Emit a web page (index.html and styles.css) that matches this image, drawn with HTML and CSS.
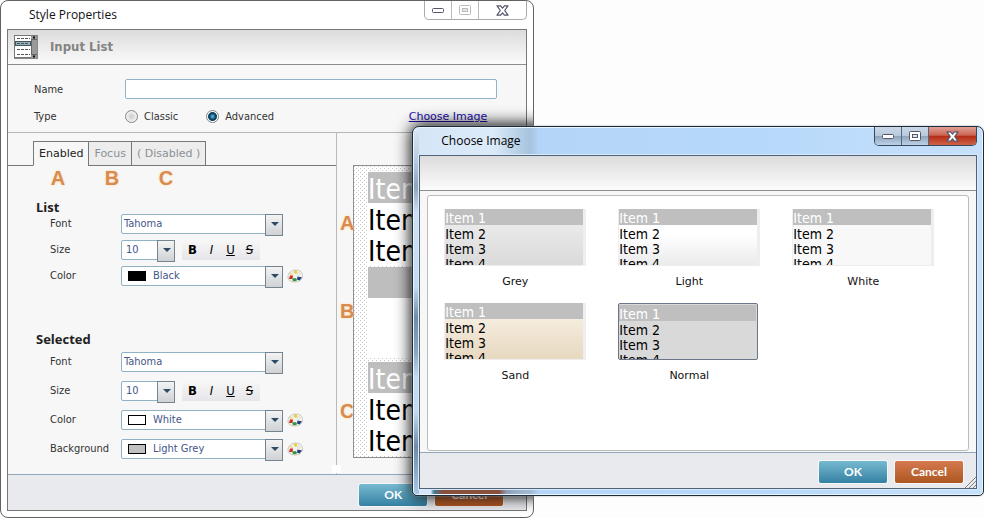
FILE: index.html
```html
<!DOCTYPE html>
<html lang="en">
<head>
<meta charset="utf-8">
<title>Style Properties</title>
<link rel="stylesheet" href="styles.css">
</head>
<body>
<svg width="0" height="0" class="defs" aria-hidden="true">
  <symbol id="i-min" viewBox="0 0 14 8"><rect x="1.5" y="2.5" width="11" height="4" rx="1" fill="#fff" stroke="#54566a"/></symbol>
  <symbol id="i-max" viewBox="0 0 12 10"><rect x=".5" y=".5" width="11" height="9" rx="1" fill="#fff" stroke="currentColor"/><rect x="3.5" y="3.5" width="5" height="3" fill="#dfe8f2" stroke="currentColor"/></symbol>
  <symbol id="i-close" viewBox="0 0 13 11"><path d="M1 .8h3.600l1.900 2.400L8.400 .8H12L8.700 5.500 12 10.200H8.400L6.500 7.800 4.600 10.200H1l3.300-4.700z" fill="#fff" stroke="#54566a" stroke-width="1.200" stroke-linejoin="round"/></symbol>
  <symbol id="i-palette" viewBox="0 0 16 14">
    <path d="M1 8C1 4 4.500 1 9 1c4 0 6.500 2.500 6.500 5.500 0 4-3.500 6.500-8 6.500C3.500 13 1 11 1 8z" fill="#f3f1ec" stroke="#c9c5bb"/>
    <circle cx="8.500" cy="3" r="1.700" fill="#e8cf3c"/><circle cx="4.300" cy="5" r="1.400" fill="#eadf9c"/><circle cx="11.500" cy="4.800" r="1.200" fill="#fff" stroke="#c6c3ba" stroke-width=".6"/>
    <path d="M3 6.500h3l-.5 3.500H2z" fill="#c9302c"/><ellipse cx="7.600" cy="10.700" rx="2.300" ry="1.600" fill="#2e9a3a"/><path d="M10.500 7.500l4.500 1-2.500 3-2.500-1z" fill="#233c86"/>
  </symbol>
</svg>
<main class="desktop">
  <section class="window properties">
    <div class="titlebar">
      <h1>Style Properties</h1>
      <div class="controls">
        <button aria-label="Minimize"><svg width="14" height="8"><use href="#i-min"/></svg></button>
        <button class="mid" aria-label="Maximize"><svg width="12" height="10"><use href="#i-max"/></svg></button>
        <button class="wide" aria-label="Close"><svg width="13" height="11"><use href="#i-close"/></svg></button>
      </div>
    </div>
    <div class="frame">
      <header class="band">
        <svg width="24" height="24" viewBox="0 0 24 24" aria-hidden="true">
          <rect x=".5" y=".5" width="22" height="22" fill="#fff" stroke="#777"/>
          <rect x="17" y="1" width="6" height="22" fill="#999"/><path d="M17.500 4v16M17 4.500h6M17 19.500h6" stroke="#666"/>
          <path d="M19 2.500h2M19 21.500h2" stroke="#111" stroke-width="2"/>
          <path d="M3 3.500h13M3 14.500h13M3 19.500h13" stroke="#555" stroke-dasharray="3 1"/>
          <rect x="1.500" y="6.500" width="15" height="4" fill="#9db0ba" stroke="#3f5560"/>
          <path d="M3 8.500h12" stroke="#3f5560" stroke-dasharray="3 1"/>
          <path d="M0 23.500h24M23.500 0v24" stroke="#888"/>
        </svg>
        <h2>Input List</h2>
      </header>
      <div class="general">
        <label for="name">Name</label>
        <input type="text" id="name" class="field">
        <span>Type</span>
        <div class="types">
          <label><input type="radio" name="type">Classic</label>
          <label><input type="radio" name="type" checked>Advanced</label>
          <a href="#choose">Choose Image</a>
        </div>
      </div>
      <div class="panes">
        <div class="settings">
          <nav class="tabs">
            <button class="on">Enabled</button><button>Focus</button><button>( Disabled )</button>
          </nav>
          <div class="keys"><b>A</b><b>B</b><b>C</b></div>
          <section class="group">
            <h3>List</h3>
            <div class="row"><label for="f1">Font</label><div class="combo"><select id="f1"><option>Tahoma</option></select></div></div>
            <div class="row"><label for="s1">Size</label><div class="combo small"><select id="s1"><option>10</option></select></div>
              <div class="format"><button><b>B</b></button><button><i>I</i></button><button><u>U</u></button><button><s>S</s></button></div></div>
            <div class="row"><label for="c1">Color</label><div class="combo color"><i class="swatch black"></i><select id="c1"><option>Black</option></select></div>
              <button class="pick" aria-label="Pick color"><svg width="16" height="14"><use href="#i-palette"/></svg></button></div>
          </section>
          <section class="group selected">
            <h3>Selected</h3>
            <div class="row"><label for="f2">Font</label><div class="combo"><select id="f2"><option>Tahoma</option></select></div></div>
            <div class="row"><label for="s2">Size</label><div class="combo small"><select id="s2"><option>10</option></select></div>
              <div class="format"><button><b>B</b></button><button><i>I</i></button><button><u>U</u></button><button><s>S</s></button></div></div>
            <div class="row"><label for="c2">Color</label><div class="combo color"><i class="swatch white"></i><select id="c2"><option>White</option></select></div>
              <button class="pick" aria-label="Pick color"><svg width="16" height="14"><use href="#i-palette"/></svg></button></div>
            <div class="row"><label for="b2">Background</label><div class="combo color"><i class="swatch silver"></i><select id="b2"><option>Light Grey</option></select></div>
              <button class="pick" aria-label="Pick background"><svg width="16" height="14"><use href="#i-palette"/></svg></button></div>
          </section>
        </div>
        <div class="preview">
          <p>Preview</p>
          <div class="canvas">
            <b class="mark mark-a">A</b><b class="mark mark-b">B</b><b class="mark mark-c">C</b>
            <ul><li class="sel">Item 1</li><li>Item 2</li><li>Item 3</li></ul>
            <ul class="blank"><li class="sel"></li></ul>
            <ul><li class="sel">Item 1</li><li>Item 2</li><li>Item 3</li></ul>
          </div>
        </div>
      </div>
      <footer class="actions"><button class="ok">OK</button><button class="cancel">Cancel</button></footer>
    </div>
    <div class="cast"></div>
  </section>

  <section class="window dialog" id="choose" role="dialog" aria-label="Choose Image">
    <div class="titlebar">
      <h1>Choose Image</h1>
      <div class="controls">
        <button aria-label="Minimize"><svg width="14" height="8"><use href="#i-min"/></svg></button>
        <button class="mid" aria-label="Maximize"><svg width="12" height="10"><use href="#i-max"/></svg></button>
        <button class="wide" aria-label="Close"><svg width="13" height="11"><use href="#i-close"/></svg></button>
      </div>
    </div>
    <div class="frame">
      <header class="band"></header>
      <div class="gallery">
        <button class="choice grey"><span class="thumb"><span>Item 1</span><span>Item 2</span><span>Item 3</span><span>Item 4</span></span>Grey</button>
        <button class="choice light"><span class="thumb"><span>Item 1</span><span>Item 2</span><span>Item 3</span><span>Item 4</span></span>Light</button>
        <button class="choice pale"><span class="thumb"><span>Item 1</span><span>Item 2</span><span>Item 3</span><span>Item 4</span></span>White</button>
        <button class="choice sand"><span class="thumb"><span>Item 1</span><span>Item 2</span><span>Item 3</span><span>Item 4</span></span>Sand</button>
        <button class="choice normal"><span class="thumb"><span>Item 1</span><span>Item 2</span><span>Item 3</span><span>Item 4</span></span>Normal</button>
      </div>
      <footer class="actions"><button class="ok">OK</button><button class="cancel">Cancel</button>
        <svg class="grip" width="12" height="12" viewBox="0 0 12 12" aria-hidden="true"><path d="M1 12 12 1M5 12l7-7M9 12l3-3" stroke="#808080" fill="none"/></svg>
      </footer>
    </div>
  </section>
</main>
</body>
</html>
```
FILE: styles.css
```css
* { box-sizing: border-box; }
body { margin: 0; background: #fdfdfd; font: 11px/14px "DejaVu Sans Condensed", "DejaVu Sans", sans-serif; color: #333; }
h1, h2, h3, p, ul { margin: 0; padding: 0; }
button { margin: 0; padding: 0; border: 0; background: none; font: inherit; color: inherit; }
svg { display: block; }
.defs { position: absolute; }
.desktop { position: relative; min-height: 100vh; overflow: hidden; }

/* Windows */
.properties { position: relative; width: 54.3%; overflow: hidden; border: 1px solid #626262; border-radius: 8px; background: #fff; padding: 0 6px 6px; }
.titlebar { display: flex; justify-content: space-between; height: 28px; }
.titlebar h1 { font: 12px/28px "Open Sans", sans-serif; color: #111; padding-left: 22px; }
.frame { border: 1px solid #777; background: #f7f7f7; }
.band { display: flex; align-items: center; gap: 12px; height: 35px; padding-left: 6px; border-bottom: 1px solid #8d8d8d; background: linear-gradient(#dcdcdc, #fbfbfb); }
.band h2 { font: bold 13px/16px "DejaVu Sans Condensed", sans-serif; color: #838383; }
.controls { display: flex; height: 19px; border: 1px solid #aaa; border-top: 0; border-radius: 0 0 5px 5px; overflow: hidden; }
.controls button { width: 27px; display: grid; place-items: center; border-right: 1px solid #bbb; }
.controls .mid { color: #bbb; }
.controls .wide { width: 47px; border: 0; }
.cast { position: absolute; left: 77.4%; top: 125px; width: 100%; height: 369px; border-radius: 8px; box-shadow: 0 0 16px 2px #000; pointer-events: none; }

/* Name and type */
.general { display: grid; grid-template-columns: 91px 1fr; row-gap: 8px; align-items: center; padding: 14px 29px 6px 26px; border-bottom: 1px solid #b5b5b5; }
.general > * { min-height: 19px; line-height: 19px; }
.general .field { width: 100%; height: 20px; border: 1px solid #8fb3ca; border-radius: 2px; background: #fff; }
.types { display: flex; align-items: center; padding-right: 10px; }
.types label { display: flex; align-items: center; gap: 6px; margin-right: 28px; }
.types a { margin-left: auto; color: #1a0db0; font-family: "DejaVu Sans", sans-serif; font-size: 11px; }
input[type="radio"] { appearance: none; width: 13px; height: 13px; margin: 0; border: 1px solid #858585; border-radius: 50%; background: radial-gradient(#ccc, #e8e8e8 50%, #fff); }
input[type="radio"]:checked { background: radial-gradient(circle, #3fa6d0 0 1px, #10415f 3px, #10415f 4px, #fff 5px); }

/* Two panes */
.panes { display: flex; }
.settings { position: relative; flex: 0 0 63.5%; padding-bottom: 15px; border-right: 1px solid #b9b9b9; }
.settings::after { content: ""; position: absolute; right: -5px; bottom: 1px; width: 9px; height: 8px; background: #fff; }
.tabs { display: flex; height: 33px; padding: 8px 0 0 25px; background: linear-gradient(#777, #777) bottom / 100% 1px no-repeat; }
.tabs button { border: 1px solid #777; border-right: 0; padding: 0 5px; background: #ededed; color: #8a9196; font: 11px/14px "DejaVu Sans", sans-serif; }
.tabs button:last-child { border-right: 1px solid #777; }
.tabs .on { background: #f7f7f7; border-bottom-color: #f7f7f7; color: #222; }
.keys { display: flex; height: 34px; padding: 1px 0 0 23px; }
.keys b { width: 54px; text-align: center; }
.keys b, .mark { font: bold 20px/22px "Liberation Sans", sans-serif; color: #d78c4e; text-shadow: 0 0 3px #ffdcb5; }
.group { display: grid; row-gap: 6px; padding-left: 42px; }
.group h3 { margin: 0 0 -6px -14px; font: bold 13px/14px "Open Sans", sans-serif; color: #222; }
.group.selected { row-gap: 9px; margin-top: 46px; }
.selected h3 { margin-bottom: -3px; }
.row { display: flex; align-items: center; height: 20px; }
.row label { width: 71px; }
.combo { position: relative; width: 162px; height: 20px; }
.combo.small { width: 54px; }
.combo select { display: block; appearance: none; width: 100%; height: 20px; margin: 0; padding: 0 18px 0 2px; border: 1px solid #8fb3c4; border-radius: 2px; background: #fff; color: #44558a; font: 11px/16px "DejaVu Sans Condensed", sans-serif; }
.combo.small select { padding-left: 4px; }
.combo.color select { padding-left: 31px; }
.combo::after { content: ""; position: absolute; right: 0; top: 0; width: 16px; height: 20px; border: 1px solid #74858f; background: linear-gradient(#f3f3f3, #cfd1d4); pointer-events: none; }
.combo::before { content: ""; position: absolute; z-index: 1; right: 4px; top: 8px; border: 4px solid transparent; border-top-color: #2f4a66; border-bottom: 0; pointer-events: none; }
.swatch { position: absolute; left: 7px; top: 5px; width: 18px; height: 10px; border: 1px solid #000; pointer-events: none; }
.black { background: #000; }
.white { background: #fff; }
.silver { background: #c0c0c0; }
.format { display: flex; margin-left: 7px; height: 20px; padding: 0 1px; background: linear-gradient(#f7f7f7, #e6e6ea); color: #000; }
.format button { width: 19px; font: 13px/20px "DejaVu Sans Condensed", sans-serif; }
.pick { margin-left: 4px; }

.preview { flex: 1; padding: 0 12px 0 16px; }
.preview p { height: 32px; padding-top: 14px; text-align: center; }
.canvas { position: relative; height: 293px; padding: 6px 14px; border: 1px solid #8e8e8e; background: conic-gradient(at 1px 1px, transparent 270deg, #c6c6c6 0) 0 0 / 4px 4px, conic-gradient(at 1px 1px, transparent 270deg, #c6c6c6 0) 2px 2px / 4px 4px, #fff; }
.canvas ul { list-style: none; height: 93px; background: #fff; color: #000; font: 28px/35px "DejaVu Sans Condensed", sans-serif; }
.canvas .blank { margin: 2px 0 4px; height: 91px; }
.canvas li { height: 31px; }
.canvas .sel { background: #bebebe; color: #fff; }
.mark { position: absolute; left: -14px; }
.mark-a { top: 46px; }
.mark-b { top: 134px; }
.mark-c { top: 234px; clip-path: inset(0 2px 0 0); }

/* Footer buttons */
.actions { position: relative; display: flex; justify-content: flex-end; gap: 8px; padding: 9px 23px 4px; border-top: 1px solid #94a7be; background: #e9eaee; }
.actions button { width: 68px; height: 22px; border-radius: 2px; color: #fff; font: bold 12px/22px Lato, sans-serif; box-shadow: 0 0 0 1px #f5f7f8; }
.actions .ok { background: linear-gradient(#76bad0, #3580a3); }
.actions .cancel { background: linear-gradient(#d5794f, #ad5720); }

/* Image chooser */
.dialog { position: absolute; top: 126px; left: 41.9%; right: 0; padding: 0 6px 6px; border: 1px solid #1e2b38; border-radius: 7px 7px 5px 5px;
  background:
    linear-gradient(90deg, transparent 18px, #659bb7 20px, #47738b 22px, #87503b 30px, #87503b 86px, #8b9eb6 94px, transparent 126px) bottom / 100% 6px no-repeat,
    linear-gradient(#dbe9f8, #b6c8df 35px, #8fa3bb 60px, #cfdff1 85px, #c4daf2 160px, #748ba8 190px, #8da4c0 225px, #c4daf2 250px, #c4daf2 285px, #7089a6 320px, #a9c9ea) left / 6px 100% no-repeat,
    linear-gradient(90deg, #d5e5f7, #dcebfa 80px, #a6c3de 117px, #b4d5f7 126px, #b6d8fb 60%, #c7e0fa);
  box-shadow: inset 0 0 0 1px #e8f5ff, 0 0 2px #9aa5af; }
.dialog .titlebar h1 { color: #000; }
.dialog .frame { border-color: #4e637a; box-shadow: 0 0 0 1px #d9eafb; }
.dialog .controls { border-color: #34495e; }
.dialog .controls button { border-color: #53677c; background: linear-gradient(#cbd9e9, #b7c9dc 48%, #8fa5bd 52%, #bdd2e8); }
.dialog .controls .mid { color: #54566a; }
.dialog .controls .wide { background: linear-gradient(#e0a196, #cc6654 45%, #b52d19 52%, #cf6347); }
.gallery { display: grid; grid-template-columns: repeat(auto-fill, 142px); gap: 14px 32px; align-content: start; min-height: 256px; margin: 4px 7px 1px; padding: 13px 16px; border: 1px solid #bcbcbc; border-radius: 3px; background: #fff; }
.choice { height: 80px; color: #111; font: 11px/14px "DejaVu Sans", sans-serif; }
.thumb { display: block; height: 57px; margin-bottom: 9px; overflow: hidden; border: 1px solid #eee; border-width: 0 3px 1px 1px; text-align: left; color: #000; font: 14px/18px "DejaVu Sans Condensed", sans-serif; }
.thumb span { display: block; height: 15px; }
.thumb span:first-child { height: 16px; background: #bfbfbf; color: #fff; }
.grey .thumb { background: linear-gradient(#f0f0f0, #dadada); }
.light .thumb { background: linear-gradient(#fff 45%, #ebebeb); }
.pale .thumb { background: #f8f8f8; }
.sand .thumb { background: linear-gradient(#fbf5ea, #e7d8c0); }
.normal .thumb { margin-right: 2px; padding: 1px 1px 0 0; background: #d9d9d9; border: 1px solid #6b7588; border-radius: 2px; }
.dialog .actions { padding: 8px 13px 5px; }
.grip { position: absolute; right: 0; bottom: 0; }
```
